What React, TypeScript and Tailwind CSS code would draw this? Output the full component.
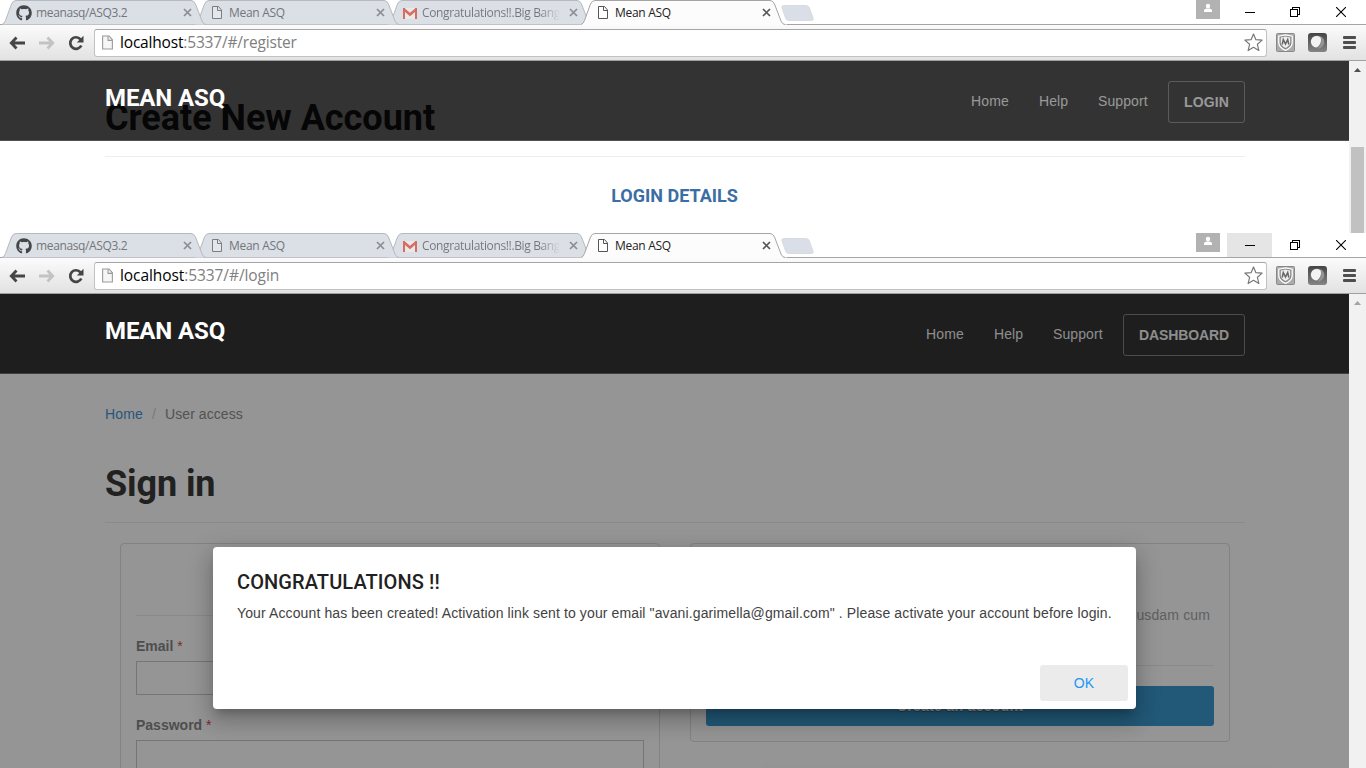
import React from "react";
import { FaGithub } from "react-icons/fa";

const chromeFont = "font-['Open_Sans','Noto_Sans',sans-serif]";
const roboto = "font-['Roboto',sans-serif]";

function PageIcon({ className, stroke, fill }: { className: string; stroke: string; fill: string }) {
  return (
    <svg viewBox="0 0 12 15" className={className} fill={fill} stroke={stroke}>
      <path d="M1.500 1.500h6l3 3.500v8.500h-9z" />
      <path d="M6.500 1.500v4h4" fill="none" />
    </svg>
  );
}

function GmailIcon() {
  return (
    <svg viewBox="0 0 16 16" className="h-4 w-4">
      <rect x="1" y="3" width="14" height="11" fill="#e9e9ea" />
      <path d="M1.500 4L8 9.500 14.500 4" fill="none" stroke="#d86c62" strokeWidth="2.500" />
      <path d="M2 3v11M14 3v11" stroke="#d86c62" strokeWidth="2" />
    </svg>
  );
}

function Close({ color }: { color: string }) {
  return (
    <svg viewBox="0 0 9 9" className="h-[9px] w-[9px] shrink-0">
      <path d="M1 1l7 7M8 1l-7 7" stroke={color} strokeWidth="1.700" />
    </svg>
  );
}

function Tab({ kind, title, active, layer }: { kind: "github" | "page" | "gmail"; title: string; active?: boolean; layer: string }) {
  return (
    <div className={`relative flex h-[25px] w-[193px] shrink-0 items-center pl-[11px] ${layer}`}>
      <svg viewBox="0 0 207 25" className="absolute -left-[4px] top-0 h-[25px] w-[207px]">
        {active ? (
          <path d="M0 25C3 24.500 3.500 23 4.500 20.500L10.500 4Q12 .5 15 .5H190Q193 .5 194.500 4L201 21Q202.500 24.500 205 24.500H207V25Z" fill="#fcfcfc" />
        ) : (
          <path d="M1 24.500Q3 24 4.500 20.500L10.500 4Q12 .5 15 .5H190Q193 .5 194.500 4L201 21Q202.500 24.500 205 24.500Z" fill="#dbdfe6" />
        )}
        <path
          d="M1 24.500Q3 24 4.500 20.500L10.500 4Q12 .5 15 .5H190Q193 .5 194.500 4L201 21Q202.500 24.500 205 24.500"
          fill="none"
          stroke={active ? "#a5a5a5" : "#b7b9bd"}
        />
      </svg>
      <div className="relative flex w-full items-center">
        <span className="flex w-5 shrink-0">
          {kind === "github" && <FaGithub className="mt-px h-4 w-4 text-[#454648]" />}
          {kind === "gmail" && <GmailIcon />}
          {kind === "page" && <PageIcon className="ml-[2px] h-[15px] w-3" stroke={active ? "#555" : "#7b7d80"} fill={active ? "#fff" : "#e3e6eb"} />}
        </span>
        <span
          className={`${chromeFont} w-[138px] shrink-0 overflow-hidden whitespace-nowrap text-[12px] leading-4 ${
            kind === "gmail"
              ? "bg-linear-to-r from-[#747679] from-85% to-[#dbdfe6] bg-clip-text tracking-[-0.36px] text-transparent"
              : active
                ? "tracking-[-0.3px] text-[#222]"
                : kind === "github"
                  ? "tracking-[-0.36px] text-[#747679]"
                  : "tracking-[-0.3px] text-[#747679]"
          }`}
        >
          {title}
        </span>
        <span className="ml-[8.500px] flex">
          <Close color={active ? "#555" : "#8b8d91"} />
        </span>
      </div>
    </div>
  );
}

function WindowButtons({ hovered }: { hovered?: boolean }) {
  return (
    <div className="ml-auto flex h-6">
      <div className="mr-[7px] flex h-[19px] w-6 justify-center bg-[#b2b2b2]">
        <svg viewBox="0 0 10 10" className="mt-[3px] h-[10px] w-[10px]" fill="#fff">
          <circle cx="5" cy="3" r="2.200" />
          <path d="M1 9V7.500C1 6 3 5.500 5 5.500s4 .5 4 2V9z" />
        </svg>
      </div>
      <div className={`flex w-[45px] items-center justify-center ${hovered ? "bg-[#e5e5e5]" : ""}`}>
        <span className="mt-px h-px w-[10px] bg-black" />
      </div>
      <div className="flex w-[46px] items-center justify-center">
        <svg viewBox="0 0 10 10" className="h-[10px] w-[10px]" fill="none" stroke="#000" shapeRendering="crispEdges">
          <path d="M.5 2.500h7v7h-7zM2.500 2.500v-2h7v7h-2" />
        </svg>
      </div>
      <div className="flex w-[48px] items-center justify-center">
        <svg viewBox="0 0 10 10" className="-ml-[2px] h-[10px] w-[10px]" stroke="#000">
          <path d="M0 0l10 10M10 0L0 10" strokeWidth="1.100" />
        </svg>
      </div>
    </div>
  );
}

function Toolbar({ path, urlSpacing }: { path: string; urlSpacing: string }) {
  return (
    <div className="flex h-[36px] items-center border-b border-[#a0a0a0] bg-linear-to-b from-[#fbfbfb] to-[#e2e2e2]">
      <svg viewBox="0 0 16 14" className="ml-[9px] h-[14px] w-4" fill="none" stroke="#454545" strokeWidth="2.800">
        <path d="M7.500 1.500L2.300 7l5.200 5.500M2.500 7H16" />
      </svg>
      <svg viewBox="0 0 16 14" className="ml-[14px] h-[14px] w-4" fill="none" stroke="#c3c3c3" strokeWidth="2.800">
        <path d="M8.500 1.500L13.700 7l-5.200 5.500M13.500 7H0" />
      </svg>
      <svg viewBox="0 0 16 16" className="ml-[13px] h-4 w-4">
        <path d="M12.500 4.300A5.800 5.800 0 1 0 13.300 10.500" fill="none" stroke="#454545" strokeWidth="2.700" />
        <path d="M15.500 .8v6.700H8.800z" fill="#454545" />
      </svg>
      <div className="ml-[10px] flex h-[28px] w-[1173px] items-center rounded-[3px] border border-[#c2c2c2] border-t-[#a5a5a5] bg-white">
        <PageIcon className="ml-[6px] h-[17px] w-[13px]" stroke="#999" fill="#f6f6f6" />
        <span className={`${chromeFont} -mt-px ml-[6px] whitespace-nowrap text-[15.500px] leading-5 text-[#808080] ${urlSpacing}`}>
          <span className="text-black">localhost</span>:5337{path}
        </span>
        <svg viewBox="0 0 18 18" className="ml-auto mr-[3px] h-[19px] w-[19px]" fill="#fff" stroke="#777" strokeWidth="1.100" strokeLinejoin="round">
          <path d="M9 1l2.300 5.300 5.900.5-4.500 3.900 1.400 5.900L9 13.500l-5.100 3.100 1.400-5.900L.8 6.800l5.900-.5z" />
        </svg>
      </div>
      <svg viewBox="0 0 19 19" className="ml-[9px] h-[19px] w-[19px]">
        <rect x=".5" y=".5" width="18" height="18" rx="1" fill="#acacac" stroke="#888" />
        <path d="M9.500 1.800l6.700 1.400v6.300c0 4-3.500 6.500-6.700 7.900-3.200-1.400-6.700-3.900-6.700-7.900V3.200z" fill="#888" stroke="#fff" strokeWidth="1.300" />
        <path d="M9.500 3.600l4.700.9v4.800c0 2.800-2.300 4.600-4.700 5.700-2.400-1.100-4.700-2.900-4.700-5.700V4.500z" fill="#eee" />
        <path d="M6.200 11.500l1.100-5 2.200 4.500 2.200-4.500 1.100 5" fill="none" stroke="#666" strokeWidth="1.500" />
      </svg>
      <svg viewBox="0 0 19 19" className="ml-[13px] h-[19px] w-[19px]">
        <defs>
          <linearGradient id="badge" x1="0" y1="0" x2="0" y2="1">
            <stop offset="0" stopColor="#444" />
            <stop offset="1" stopColor="#858585" />
          </linearGradient>
        </defs>
        <rect width="19" height="19" rx="3" fill="url(#badge)" />
        <circle cx="9.500" cy="9.500" r="7" fill="#777" />
        <path d="M12.500 3.300c3 1.500 4.200 4.800 3.300 7.500s-3.500 5-6.500 5c3-2.500 5.500-6.500 3.200-12.500z" fill="#959595" />
        <path d="M3 7.500C4 3 9 2 12.500 4.200c1.500 4-.5 8.300-4 10.300C4.500 14 2.500 11 3 7.500z" fill="#f3f3f3" />
      </svg>
      <div className="ml-[16px] flex w-[13px] flex-col gap-[2px]">
        <span className="h-[3px] rounded-[1px] bg-[#4e4e4e]" />
        <span className="h-[3px] rounded-[1px] bg-[#4e4e4e]" />
        <span className="h-[3px] rounded-[1px] bg-[#4e4e4e]" />
      </div>
    </div>
  );
}

function Browser({
  path,
  urlSpacing,
  hovered,
  height,
  children,
}: {
  path: string;
  urlSpacing: string;
  hovered?: boolean;
  height: string;
  children: React.ReactNode;
}) {
  return (
    <div className={`flex w-[1366px] flex-col overflow-hidden bg-white ${height}`}>
      <div className="relative flex h-[25px] shrink-0 border-b border-[#a5a5a5] pl-[5px]">
        <Tab kind="github" title="meanasq/ASQ3.2" layer="z-[3]" />
        <Tab kind="page" title="Mean ASQ" layer="z-[2]" />
        <Tab kind="gmail" title="Congratulations!!.Big Bang" layer="z-[1]" />
        <Tab kind="page" title="Mean ASQ" layer="z-[4]" active />
        <svg viewBox="0 0 33 16" className="ml-[4px] mt-[5px] h-4 w-[33px]">
          <path d="M1 3Q0 .5 3 .5H25Q27.500 .5 28.500 3L32 13Q33 15.500 30 15.500H8Q5.500 15.500 4.500 13Z" fill="#dadfe7" stroke="#d0d4da" strokeWidth=".7" />
        </svg>
        <WindowButtons hovered={hovered} />
      </div>
      <div className="shrink-0">
        <Toolbar path={path} urlSpacing={urlSpacing} />
      </div>
      <div className="flex min-h-0 grow">{children}</div>
    </div>
  );
}

function Scrollbar({ thumb }: { thumb?: boolean }) {
  return (
    <div className="flex w-[17px] shrink-0 flex-col items-center bg-[#f1f1f1]">
      <svg viewBox="0 0 7 4" className="mt-[7px] h-1 w-[7px] shrink-0" fill={thumb ? "#505050" : "#a3a3a3"}>
        <path d="M3.500 0L7 4H0z" />
      </svg>
      {thumb && <div className="mt-[75px] w-[13px] grow bg-[#c1c1c1]" />}
    </div>
  );
}

function SiteHeader({ button, buttonStyle }: { button: string; buttonStyle: string }) {
  return (
    <header className="absolute inset-x-0 top-0 z-20 flex h-20 border-b border-white/15 bg-black/80 pl-[105px] pr-[104px]">
      <span className={`${roboto} mt-[21px] text-[24px] font-bold leading-8 tracking-[-0.1px] text-white`}>MEAN ASQ</span>
      <nav className="ml-auto flex pt-5 text-[14px] leading-5 text-white/50">
        <a className="mt-[10px] w-[38px] tracking-[0.15px]">Home</a>
        <a className="ml-[30px] mt-[10px] w-[29px] tracking-[0.1px]">Help</a>
        <a className="ml-[30px] mt-[10px] w-[50px] tracking-[0.1px]">Support</a>
        <a className={`ml-5 flex h-[42px] items-center justify-center rounded-[3px] border border-white/20 font-bold ${buttonStyle}`}>{button}</a>
      </nav>
    </header>
  );
}

function Label({ text }: { text: string }) {
  return (
    <label className="text-[14px] font-bold leading-5 text-[#777]">
      {text} <span className="font-normal text-[#c33]">*</span>
    </label>
  );
}

export default function App() {
  return (
    <div className="h-[768px] w-[1366px] overflow-hidden bg-white font-['Liberation_Sans',Arial,sans-serif]">
      <Browser path="/#/register" urlSpacing="tracking-[-0.18px]" height="h-[233px]">
        <main className="relative grow overflow-hidden">
          <SiteHeader button="LOGIN" buttonStyle="w-[77px] tracking-[0.1px]" />
          <div className="flex flex-col px-[105px] pt-[37px]">
            <h1 className={`${roboto} text-[36px] font-bold leading-10 tracking-[-0.02px] text-[#222]`}>Create New Account</h1>
            <hr className="mr-[-1px] mt-[18px] border-[#eee]" />
            <h2 className={`${roboto} mt-[27px] text-center text-[18px] font-bold leading-6 text-[#3a6ea5]`}>LOGIN DETAILS</h2>
          </div>
        </main>
        <Scrollbar thumb />
      </Browser>
      <Browser path="/#/login" urlSpacing="tracking-[-0.08px]" hovered height="h-[535px]">
        <main className="relative grow overflow-hidden">
          <SiteHeader button="DASHBOARD" buttonStyle="w-[122px] tracking-[-0.1px]" />
          <div className="flex flex-col pl-[105px] pr-[104px] pt-[110px]">
            <div className="flex text-[14px] leading-5 text-[#808080]">
              <span className="w-[38px] tracking-[0.15px] text-[#2c88d0]">Home</span>
              <span className="w-[22px] text-center text-[#ccc]">/</span>
              <span className="tracking-[0.08px]">User access</span>
            </div>
            <h1 className={`${roboto} mt-[40px] text-[36px] font-bold leading-10 tracking-[-0.1px] text-[#222]`}>Sign in</h1>
            <hr className="mt-[18px] border-[#eaeaea]" />
            <div className="mt-[20px] flex items-start gap-[30px] px-[15px]">
              <section className="flex h-[300px] w-[540px] flex-col rounded-[4px] border border-[#dadada] px-[15px] pt-[71px]">
                <hr className="border-[#eaeaea]" />
                <div className="mt-[20px] flex flex-col">
                  <Label text="Email" />
                  <div className="mt-[5px] h-[34px] border border-[#c2c2c2]" />
                </div>
                <div className="mt-5 flex flex-col">
                  <Label text="Password" />
                  <div className="mt-[5px] h-[34px] border border-[#c2c2c2]" />
                </div>
              </section>
              <section className="flex h-[199px] w-[540px] flex-col rounded-[4px] border border-[#dadada] px-[15px] pt-[61px]">
                <p className="pr-1 text-right text-[14px] leading-5 tracking-[0.14px] text-[#999]">usdam cum</p>
                <hr className="mt-[40px] border-[#eaeaea]" />
                <div className="mt-5 flex h-10 items-center justify-center rounded-[3px] bg-[#238dc8] text-[14px] font-bold tracking-[0.3px] text-white [text-shadow:0_1px_1px_rgba(0,0,0,0.4)]">
                  Create an account
                </div>
              </section>
            </div>
          </div>
          <div className="absolute inset-0 z-10 bg-[#212121]/48" />
          <div className="absolute left-[213px] top-[253px] z-30 flex h-[162px] w-[923px] flex-col rounded-[4px] bg-white px-6 pt-[23px] shadow-[0_7px_8px_-4px_rgba(0,0,0,0.2),0_13px_19px_2px_rgba(0,0,0,0.14),0_5px_24px_4px_rgba(0,0,0,0.12)]">
            <h2 className={`${roboto} text-[20px] font-medium leading-6 tracking-[0.1px] text-[#212121]`}>CONGRATULATIONS !!</h2>
            <p className="mt-[9px] whitespace-nowrap text-[14px] leading-5 tracking-[0.116px] text-[#424242]">
              Your Account has been created! Activation link sent to your email "avani.garimella@gmail.com" . Please activate your account before login.
            </p>
            <button className="-mr-4 mt-[42px] h-9 w-[88px] shrink-0 self-end rounded-[3px] bg-[#ebebeb] text-[14px] tracking-[0.14px] text-[#2196f3]">OK</button>
          </div>
        </main>
        <Scrollbar />
      </Browser>
    </div>
  );
}
